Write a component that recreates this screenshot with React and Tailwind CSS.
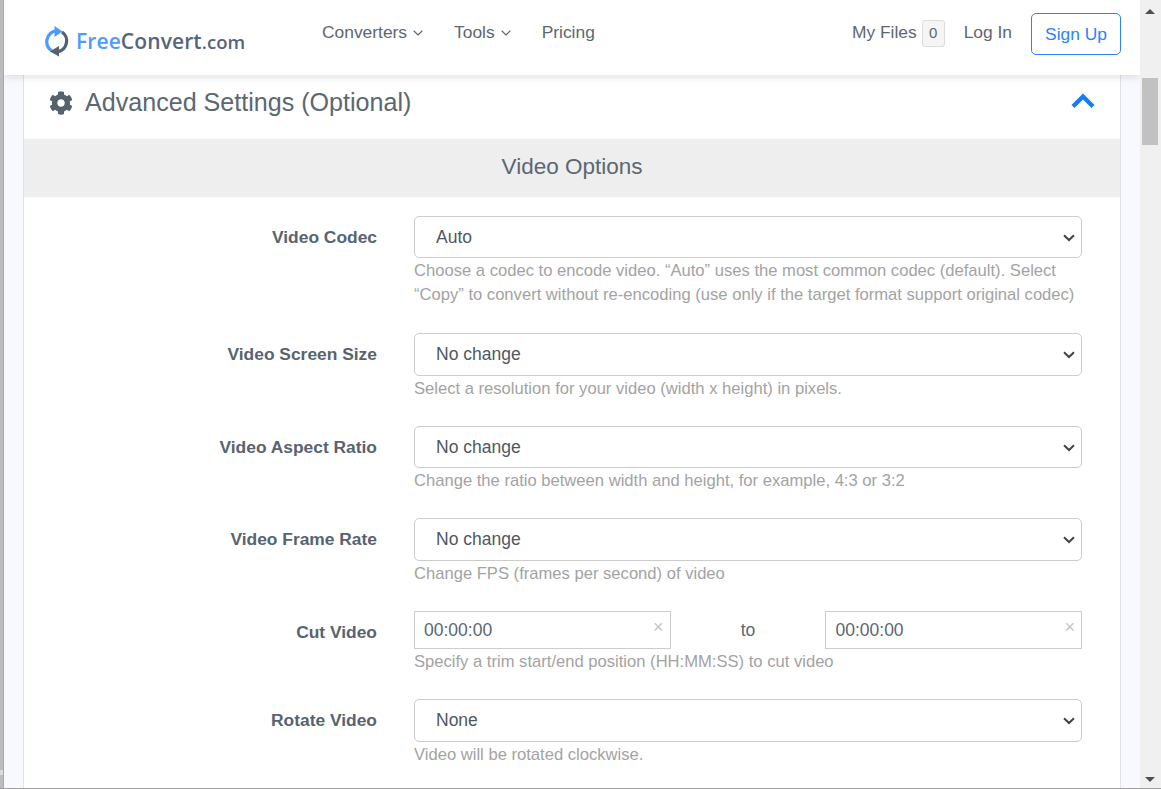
import { ChevronDown } from "lucide-react";

const Logo = () => (
  <div className="flex items-center">
    <svg width="26" height="31" viewBox="0 0 26 31" fill="none" className="mr-[6px]">
      <path d="M8 25 A11 11 0 0 1 12 4.8" stroke="#4e9bff" strokeWidth="3.2" />
      <path d="M10.5 0 L18.5 5.5 L10.5 11 Z" fill="#4e9bff" />
      <path d="M18 6 A11 11 0 0 1 13.5 25.8" stroke="#54616e" strokeWidth="3.2" />
      <path d="M15 20 L6 25.4 L15 30.5 Z" fill="#54616e" />
    </svg>
    <span className="font-['Open_Sans',sans-serif] font-semibold text-[21px] leading-none tracking-[0.1px] text-[#56657a]">
      <span className="text-[#4e9bff]">Free</span>Convert<span className="text-[18.5px]">.com</span>
    </span>
  </div>
);

const Nav = () => (
  <div className="relative z-10 flex h-[75px] shrink-0 items-center bg-white pl-[40px] pr-[19px] shadow-[0_2px_8px_rgba(0,0,0,0.12)]">
    <div className="mt-[7px] w-[278px]">
      <Logo />
    </div>
    <div className="mb-[11px] flex items-center text-[17.4px] text-[#5c6772]">
      <span className="flex items-center">
        Converters
        <ChevronDown size={16} strokeWidth={1.6} className="ml-[3px] mt-[2px]" />
      </span>
      <span className="ml-[28px] flex items-center">
        Tools
        <ChevronDown size={16} strokeWidth={1.6} className="ml-[3px] mt-[2px]" />
      </span>
      <span className="ml-[28px]">Pricing</span>
    </div>
    <div className="ml-auto flex items-center text-[17.4px] text-[#5c6772]">
      <span className="mb-[11px] flex items-center">
        My Files
        <span className="ml-[5px] mt-[2px] flex h-[27px] w-[23px] items-center justify-center rounded-[3px] border border-[#dddddd] bg-[#f5f5f5] text-[15px]">
          0
        </span>
      </span>
      <span className="mb-[11px] ml-[19px]">Log In</span>
      <span className="mb-[7px] ml-[19px] flex h-[42px] w-[90px] items-center justify-center rounded-[5px] border border-[#2b83ff] text-[#2b83ff]">
        Sign Up
      </span>
    </div>
  </div>
);

const Row = ({ label, children, hint, className }) => (
  <div className={`flex ${className}`}>
    <div className="w-[353px] pt-[9px] text-right text-[17.4px] font-bold leading-[24px] text-[#58636f]">{label}</div>
    <div className="ml-[37px] w-[668px]">
      {children}
      <div className="mt-[1px] whitespace-pre-line text-[16.6px] leading-[24px] text-[#a3a3a3]">{hint}</div>
    </div>
  </div>
);

const Select = ({ value, options }) => (
  <div className="relative h-[42.5px]">
    <select
      defaultValue={value}
      className="h-full w-full appearance-none rounded-[5px] border border-[#cccccc] bg-white pl-[21px] text-[17.5px] text-[#4f5861] outline-none"
    >
      {(options || [value]).map((o) => (
        <option key={o}>{o}</option>
      ))}
    </select>
    <svg width="12" height="8" viewBox="0 0 12 8" fill="none" className="absolute right-[7px] top-[18px]">
      <path d="M1 1.2 L6 6 L11 1.2" stroke="#444444" strokeWidth="2" />
    </svg>
  </div>
);

const TimeInput = () => (
  <div className="relative h-[38.5px] w-[256.5px]">
    <input
      readOnly
      value="00:00:00"
      className="h-full w-full border border-[#cccccc] bg-white pl-[9px] pt-[1px] text-[17.5px] text-[#5c6772] outline-none"
    />
    <span className="absolute right-[7px] top-[6px] text-[18px] leading-[20px] text-[#c4c4c4]">×</span>
  </div>
);

export default function App() {
  return (
    <div className="flex h-[789px] w-[1161px] overflow-hidden border-b border-[#a0a0a0] bg-[#f0f0f0] font-['Liberation_Sans',Arial,sans-serif]">
      {/* Window edge */}
      <div className="flex w-[4px] shrink-0 flex-col border-r border-[#a8a8a8] bg-[#bcbcbc]">
        <div className="grow" />
        <div className="h-[5px] bg-[#dcdcdc]" />
        <div className="h-[13px]" />
      </div>
      <div className="flex h-full w-[1136px] shrink-0 flex-col overflow-hidden bg-[#f8f9ff]">
        <Nav />
        <div className="ml-[19px] w-[1098px] grow border-x border-[#dfe1e6] bg-white">
          {/* Advanced settings header */}
          <div className="flex h-[64px] items-center justify-between pb-[8px] pl-[25px] pr-[25px]">
            <div className="flex items-center text-[25.1px] text-[#5c6772]">
              <svg width="24" height="24" viewBox="0 0 512 512" fill="#56616c" className="mr-[12px]">
                <path d="M487.4 315.7l-42.6-24.6c4.3-23.2 4.3-47 0-70.2l42.6-24.6c4.9-2.8 7.1-8.6 5.5-14-11.1-35.6-30-67.8-54.7-94.6-3.8-4.1-10-5.1-14.8-2.3L380.8 110c-17.9-15.4-38.5-27.3-60.8-35.1V25.8c0-5.6-3.9-10.5-9.4-11.7-36.7-8.2-74.3-7.8-109.2 0-5.5 1.2-9.4 6.1-9.4 11.7V75c-22.2 7.9-42.8 19.8-60.8 35.1L88.7 85.5c-4.9-2.8-11-1.9-14.8 2.3-24.7 26.7-43.6 58.9-54.7 94.6-1.7 5.4.6 11.2 5.5 14L67.3 221c-4.3 23.2-4.3 47 0 70.2l-42.6 24.6c-4.9 2.8-7.1 8.6-5.5 14 11.1 35.6 30 67.8 54.7 94.6 3.8 4.1 10 5.1 14.8 2.3l42.6-24.6c17.9 15.4 38.5 27.3 60.8 35.1v49.2c0 5.6 3.9 10.5 9.4 11.7 36.7 8.2 74.3 7.8 109.2 0 5.5-1.2 9.4-6.1 9.4-11.7v-49.2c22.2-7.9 42.8-19.8 60.8-35.1l42.6 24.6c4.9 2.8 11 1.9 14.8-2.3 24.7-26.7 43.6-58.9 54.7-94.6 1.5-5.5-.7-11.3-5.6-14.1zM256 336c-44.1 0-80-35.9-80-80s35.9-80 80-80 80 35.9 80 80-35.9 80-80 80z" />
              </svg>
              Advanced Settings (Optional)
            </div>
            <svg width="24" height="16" viewBox="0 0 24 16" fill="none" className="mb-[4px]">
              <path d="M2 13.5 L12 3.5 L22 13.5" stroke="#1a7cf5" strokeWidth="4.4" />
            </svg>
          </div>

          <div className="flex h-[58px] items-center justify-center bg-[#eeeeee] pb-[3px] text-[22.5px] text-[#5c6772]">
            Video Options
          </div>

          <div className="pt-[18.5px]">
            <Row
              label="Video Codec"
              className="mb-[26px]"
              hint={"Choose a codec to encode video. “Auto” uses the most common codec (default). Select\n“Copy” to convert without re-encoding (use only if the target format support original codec)"}
            >
              <Select value="Auto" options={["Auto", "Copy"]} />
            </Row>
            <Row label="Video Screen Size" className="mb-[25px]" hint="Select a resolution for your video (width x height) in pixels.">
              <Select value="No change" />
            </Row>
            <Row label="Video Aspect Ratio" className="mb-[25px]" hint="Change the ratio between width and height, for example, 4:3 or 3:2">
              <Select value="No change" />
            </Row>
            <Row label="Video Frame Rate" className="mb-[25px]" hint="Change FPS (frames per second) of video">
              <Select value="No change" />
            </Row>
            <Row label="Cut Video" className="mb-[25px]" hint="Specify a trim start/end position (HH:MM:SS) to cut video">
              <div className="flex items-center justify-between">
                <TimeInput />
                <span className="text-[17.5px] text-[#5c6772]">to</span>
                <TimeInput />
              </div>
            </Row>
            <Row label="Rotate Video" hint="Video will be rotated clockwise.">
              <Select value="None" />
            </Row>
          </div>
        </div>
      </div>

      {/* Browser scrollbar */}
      <div className="flex h-full w-[21px] shrink-0 flex-col items-center bg-[#f0f0f0] pr-[1px]">
        <div className="mt-[9px] h-0 w-0 border-x-[5px] border-b-[5px] border-x-transparent border-b-[#505050]" />
        <div className="mt-[64px] h-[67px] w-[16px] bg-[#c1c1c1]" />
        <div className="mb-[6px] mt-auto h-0 w-0 border-x-[5px] border-t-[5px] border-x-transparent border-t-[#505050]" />
      </div>
    </div>
  );
}
